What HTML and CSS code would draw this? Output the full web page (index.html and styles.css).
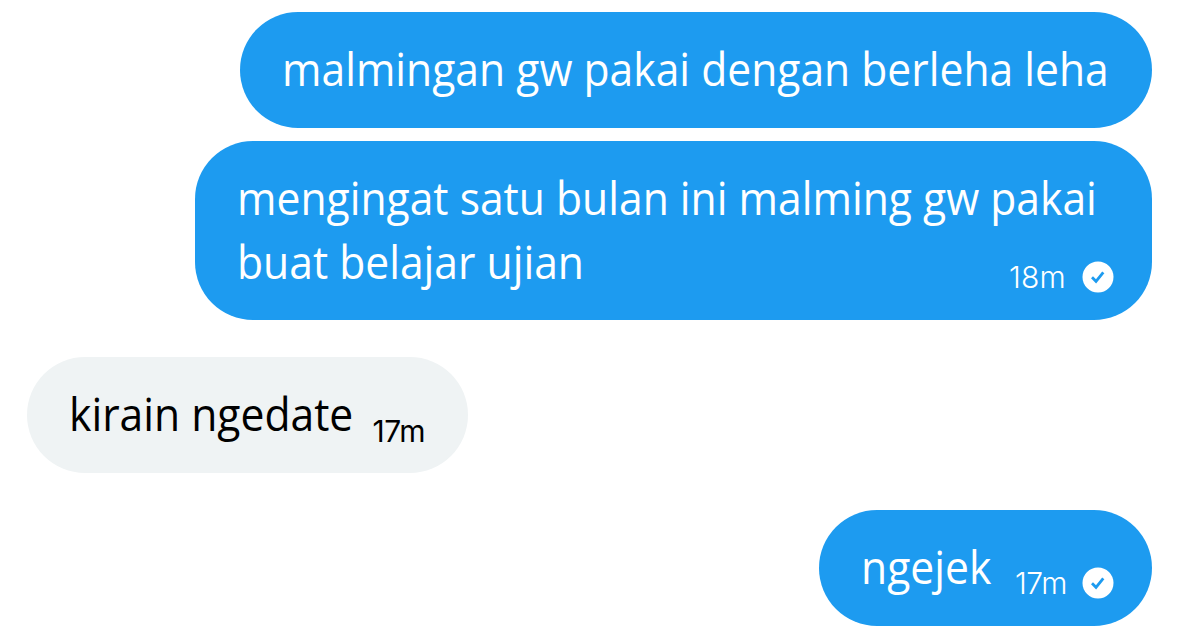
FILE: index.html
```html
<!DOCTYPE html>
<html lang="id">
<head>
<meta charset="utf-8">
<title>Messages</title>
<link rel="stylesheet" href="styles.css">
</head>
<body>
<main class="chat">
  <div class="bubble sent first"><p class="line">malmingan gw pakai dengan berleha leha</p></div>
  <div class="bubble sent second">
    <p class="line">mengingat satu bulan ini malming gw pakai<br>buat belajar ujian</p>
    <div class="meta"><span class="time">18m</span>
      <svg class="check" viewBox="0 0 32 32"><circle cx="16" cy="16" r="15.5" fill="#fff"/><path d="M10 16.3 14 20.3 21.3 11.3" fill="none" stroke="#1d9bf0" stroke-width="2.8"/></svg>
    </div>
  </div>
  <div class="bubble received"><p class="line">kirain ngedate</p><span class="time t4">17m</span></div>
  <div class="bubble sent last"><p class="line">ngejek</p>
    <div class="meta"><span class="time">17m</span>
      <svg class="check" viewBox="0 0 32 32"><circle cx="16" cy="16" r="15.5" fill="#fff"/><path d="M10 16.3 14 20.3 21.3 11.3" fill="none" stroke="#1d9bf0" stroke-width="2.8"/></svg>
    </div>
  </div>
</main>
</body>
</html>
```
FILE: styles.css
```css
* { box-sizing: border-box; }
body { margin: 0; background: #fff; font-family: "Open Sans", sans-serif; }
p { margin: 0; }
.chat { display: flex; flex-direction: column; height: 635px; padding: 12px 27px 0; overflow: hidden; }
.bubble { display: flex; height: 116px; padding: 25px 39px 0 42px; border-radius: 58px; font-size: 45px; line-height: 64px; white-space: nowrap; }
.sent { align-self: flex-end; background: #1d9bf0; color: #fff; }
.line { transform: scaleX(0.947); transform-origin: 0 0; }
.first { width: 912px; }
.second { width: 957px; height: 179px; margin-top: 13px; position: relative; }
.received { align-self: flex-start; justify-content: space-between; width: 441px; margin-top: 37px; padding-right: 43px; background: #eff3f4; color: #000; }
.last { justify-content: space-between; width: 333px; margin-top: 37px; }
.meta { display: flex; align-items: center; gap: 16px; height: 32px; }
.second .meta { position: absolute; right: 38px; bottom: 27px; }
.last .meta { gap: 15px; margin: 32px -1px 0 0; }
.time { font-family: Inter, sans-serif; font-size: 30px; line-height: 32px; }
.sent .time { font-weight: 350; }
.second .time { letter-spacing: 0.2px; }
.last .time { letter-spacing: -0.4px; }
.t4 { margin-top: 33px; letter-spacing: -0.5px; }
.check { width: 32px; height: 32px; flex: none; }
```
